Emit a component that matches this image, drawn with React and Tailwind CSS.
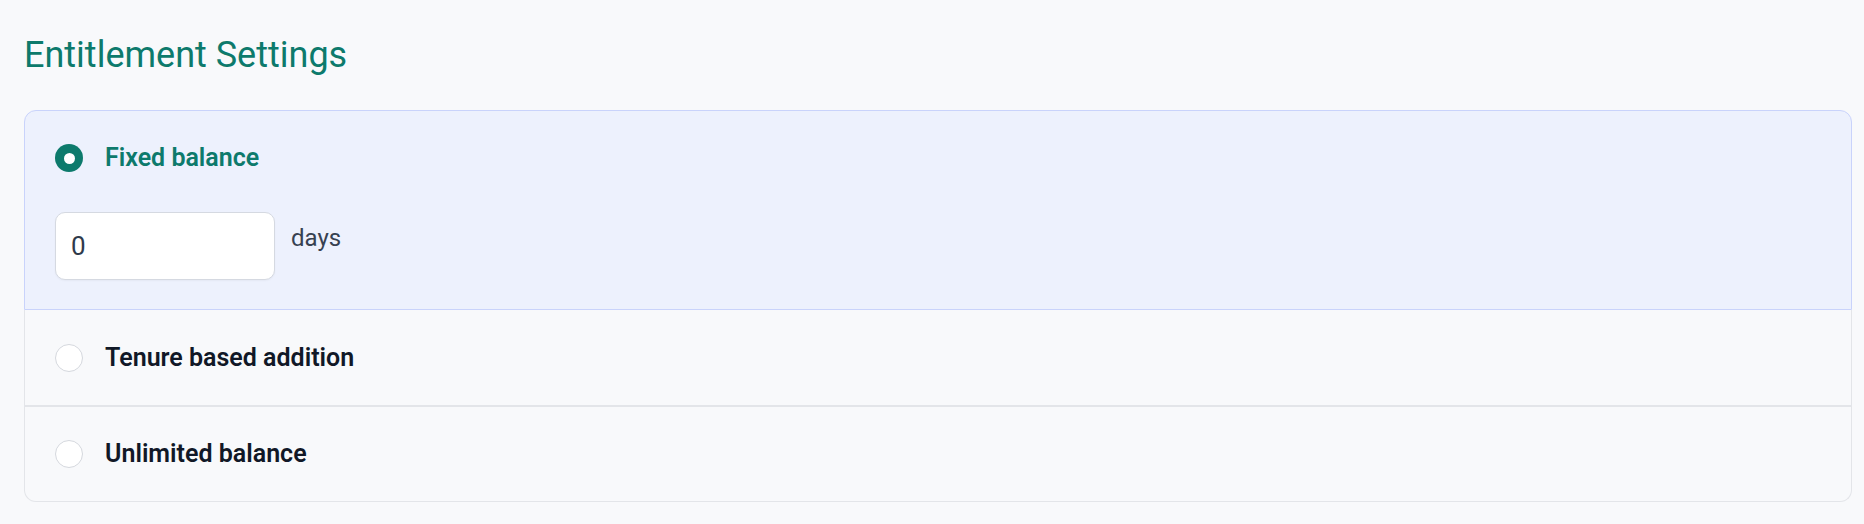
import React from "react";

function Radio({ checked }) {
  if (checked) {
    return (
      <span className="flex h-[28px] w-[28px] shrink-0 items-center justify-center rounded-full bg-[#0d7a6c]">
        <span className="h-[11px] w-[11px] rounded-full bg-white" />
      </span>
    );
  }
  return (
    <span className="block h-[28px] w-[28px] shrink-0 rounded-full border border-[#d5d8de] bg-white" />
  );
}

export default function App() {
  return (
    <div
      className="min-h-[524px] w-full bg-[#f8f9fb] pl-[24px] pr-[12px] pt-[33px]"
      style={{ fontFamily: "Roboto, 'Liberation Sans', sans-serif" }}
    >
      <h1 className="text-[36px] leading-[45px] font-normal text-[#0d7a6c]">
        Entitlement Settings
      </h1>
      <div className="mt-[32px] flex flex-col">
        <div className="rounded-t-[12px] border border-[#c9d3fb] bg-[#edf1fd] pl-[30px] pt-[33px] pb-[29px]">
          <div className="flex h-[28px] items-center gap-[22px]">
            <Radio checked />
            <span className="text-[25px] font-semibold text-[#0d7a6c]">Fixed balance</span>
          </div>
          <div className="mt-[40px] flex items-start gap-[16px]">
            <div className="flex h-[68px] w-[220px] items-center rounded-[10px] border border-[#d5d9e1] bg-white pl-[15px] text-[26px] text-[#2f3a4b] shadow-[0_1px_2px_rgba(0,0,0,0.04)]">
              0
            </div>
            <span className="mt-[8px] text-[24px] leading-[36px] text-[#374151]">days</span>
          </div>
        </div>
        <div className="flex h-[97px] items-center gap-[22px] border-x border-b-2 border-x-[#e3e5e9] border-b-[#e3e5e9] bg-[#f8f9fb] pl-[30px]">
          <Radio />
          <span className="text-[25px] font-semibold text-[#111827]">Tenure based addition</span>
        </div>
        <div className="flex h-[95px] items-center gap-[22px] rounded-b-[12px] border-x border-b border-[#e3e5e9] bg-[#f8f9fb] pl-[30px]">
          <Radio />
          <span className="text-[25px] font-semibold text-[#111827]">Unlimited balance</span>
        </div>
      </div>
    </div>
  );
}
